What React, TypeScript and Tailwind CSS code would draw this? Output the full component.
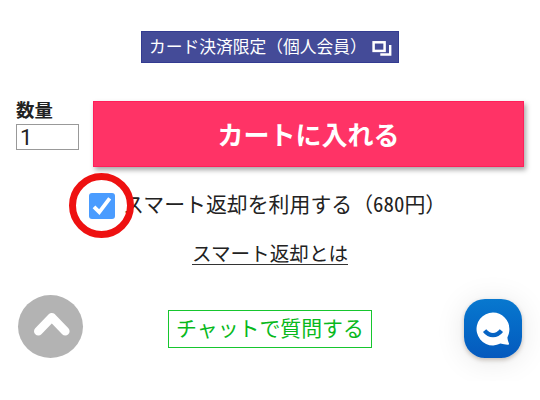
import React, { useState } from 'react';

const WindowIcon: React.FC = () => (
    <svg width="20" height="15" viewBox="0 0 20 15" fill="none" stroke="currentColor">
        <rect x="1.6" y="1.3" width="11" height="8.600" strokeWidth="2.500" />
        <path d="M18.200 4V13.500H8.300" strokeWidth="2.400" />
    </svg>
);

const ChatIcon: React.FC = () => (
    <svg width="34" height="34" viewBox="0 0 34 34" fill="none">
        <path
            d="M17 .6a16.400 16.400 0 0 1 16.400 16.400c0 3.800-1.100 6.400-2 8.500.1 2 .9 4.200 1.500 5.700.4 1-.2 1.700-1.200 1.600-2.300-.2-5-.5-7.300-1.200A16.400 16.400 0 1 1 17 .6Z"
            fill="#fff"
        />
        <path d="M8.600 18.600c4.700 6 12.100 6 16.800 0" stroke="#0764c4" strokeWidth="4.200" />
    </svg>
);

const App: React.FC = () => {
    const [quantity, setQuantity] = useState('1');
    const [smartReturn, setSmartReturn] = useState(true);

    return (
        <div className="relative w-[540px] h-[400px] overflow-hidden bg-white text-[#222] font-['Noto_Sans_CJK_JP',sans-serif]">
            <div className="flex justify-center pt-[31px]">
                <div className="flex h-8 w-[258px] items-center border border-[#333b91] bg-[#444b98] pl-[7px] text-white">
                    <span className="whitespace-nowrap pb-0.5 text-[16.75px] leading-[30px]">カード決済限定（個人会員）</span>
                    <span className="ml-[5px] pt-0.5"><WindowIcon /></span>
                </div>
            </div>

            <div className="mt-[38px] flex pl-4">
                <div className="w-[77px]">
                    <label htmlFor="quantity" className="block h-[23px] text-[18.4px] font-bold leading-4">数量</label>
                    <input
                        id="quantity"
                        type="text"
                        className="block h-[26px] w-[63px] border border-[#999] pl-[3px] font-['Roboto',sans-serif] text-[22px] leading-6 text-[#222]"
                        value={quantity}
                        onChange={(e) => setQuantity(e.target.value)}
                    />
                </div>
                <button className="mb-px h-[66px] w-[431px] border border-[#ff1f59] bg-[#ff3366] pb-px text-[26px] font-bold leading-none text-white shadow-[2px_3px_5px_rgba(0,0,0,0.35)]">
                    カートに入れる
                </button>
            </div>

            <div className="mt-[25px] flex h-[26px] items-center pl-[89px]">
                <button
                    role="checkbox"
                    aria-checked={smartReturn}
                    onClick={() => setSmartReturn(!smartReturn)}
                    className="relative h-[26px] w-[26px] rounded-[3px] bg-[#4a9cff]"
                >
                    {smartReturn && (
                        <svg width="26" height="26" viewBox="0 0 26 26" fill="none">
                            <path d="M5 13.800l5.300 5.400L20.700 5.400" stroke="#fff" strokeWidth="3.800" />
                        </svg>
                    )}
                    <span className="absolute -left-[20px] -top-[20px] z-10 h-[65px] w-[65px] rounded-full border-[7px] border-[#ee1111]" />
                </button>
                <span className="ml-2 whitespace-nowrap pb-1.5 text-[20.9px] leading-5">
                    スマート返却を利用する（<span className="[font-feature-settings:'hwid']">680</span>円）
                </span>
            </div>

            <div className="mt-[23px] flex justify-center">
                <a href="#" className="h-[23px] whitespace-nowrap border-b border-[#333] text-[19.6px] leading-[21px]">スマート返却とは</a>
            </div>

            <div className="mt-[45px] flex justify-center">
                <button className="h-[38px] w-[204px] whitespace-nowrap border border-[#16c62e] pb-[3px] text-[20.9px] leading-none text-[#08b91c]">
                    チャットで質問する
                </button>
            </div>

            {/* Floating buttons */}
            <button className="absolute left-[18px] top-[295px] h-[63px] w-[65px] rounded-[50%] bg-[#b3b3b3]">
                <svg width="65" height="63" viewBox="0 0 65 63" fill="none">
                    <path d="M20.500 36.500L34 22.500L47.500 36.500" transform="translate(-.2 -.3)" stroke="#fff" strokeWidth="8.600" strokeLinecap="round" strokeLinejoin="round" />
                </svg>
            </button>
            <div className="absolute right-0 top-[260px] h-[121px] w-[130px] overflow-hidden">
                <button className="absolute left-[54px] top-[39px] flex h-[59px] w-[58px] items-center justify-center rounded-[21px] bg-linear-to-b from-[#0878cf] to-[#0559bd] shadow-[0_2px_4px_rgba(60,30,0,0.25),0_3px_30px_rgba(0,0,0,0.1)]">
                    <ChatIcon />
                </button>
            </div>
        </div>
    );
};

export default App;
